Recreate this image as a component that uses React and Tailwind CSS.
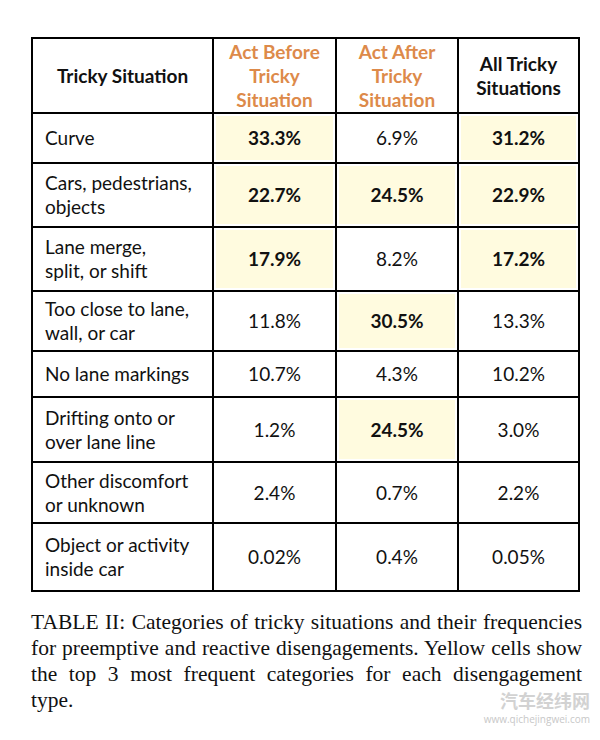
const rows = [
  { label: ['Curve'], h: 'h-[50px]', vals: [['33.3%', true], ['6.9%', false], ['31.2%', true]] },
  { label: ['Cars, pedestrians,', 'objects'], h: 'h-[64px]', vals: [['22.7%', true], ['24.5%', true], ['22.9%', true]] },
  { label: ['Lane merge,', 'split, or shift'], h: 'h-[64px]', vals: [['17.9%', true], ['8.2%', false], ['17.2%', true]] },
  { label: ['Too close to lane,', 'wall, or car'], h: 'h-[60px]', vals: [['11.8%', false], ['30.5%', true], ['13.3%', false]] },
  { label: ['No lane markings'], h: 'h-[46px]', vals: [['10.7%', false], ['4.3%', false], ['10.2%', false]] },
  { label: ['Drifting onto or', 'over lane line'], h: 'h-[65px]', vals: [['1.2%', false], ['24.5%', true], ['3.0%', false]] },
  { label: ['Other discomfort', 'or unknown'], h: 'h-[61px]', vals: [['2.4%', false], ['0.7%', false], ['2.2%', false]] },
  { label: ['Object or activity', 'inside car'], h: 'h-[68px]', vals: [['0.02%', false], ['0.4%', false], ['0.05%', false]] },
]

const caption = [
  'TABLE II: Categories of tricky situations and their frequencies',
  'for preemptive and reactive disengagements. Yellow cells show',
  'the top 3 most frequent categories for each disengagement',
]

function Cell({ value, hi }) {
  return (
    <td
      className={
        'border-2 border-black text-center align-middle ' +
        (hi ? 'bg-[#fffbdf] shadow-[inset_0_0_0_2px_white] font-bold' : '')
      }
    >
      {value}
    </td>
  )
}

export default function App() {
  return (
    <div className="relative w-[600px] h-[740px] bg-white pt-[37px] pl-[31px]">
      <table
        className="border-collapse border-2 border-black text-[19px] leading-[24px] text-[#111]"
        style={{ fontFamily: 'Lato, "Open Sans", sans-serif' }}
      >
        <colgroup>
          <col className="w-[181px]" />
          <col className="w-[123px]" />
          <col className="w-[122px]" />
          <col className="w-[121px]" />
        </colgroup>
        <thead>
          <tr className="h-[75px]">
            <th className="border-2 border-black text-center align-middle font-bold">Tricky Situation</th>
            <th className="border-2 border-black text-center align-middle font-bold text-[#dd8a4a]">
              Act Before
              <br />
              Tricky
              <br />
              Situation
            </th>
            <th className="border-2 border-black text-center align-middle font-bold text-[#dd8a4a]">
              Act After
              <br />
              Tricky
              <br />
              Situation
            </th>
            <th className="border-2 border-black text-center align-middle font-bold">
              All Tricky
              <br />
              Situations
            </th>
          </tr>
        </thead>
        <tbody>
          {rows.map((r, i) => (
            <tr key={i} className={r.h}>
              <td className="border-2 border-black pl-[12px] align-middle">
                {r.label.map((l, j) => (
                  <div key={j}>{l}</div>
                ))}
              </td>
              {r.vals.map(([v, hi], j) => (
                <Cell key={j} value={v} hi={hi} />
              ))}
            </tr>
          ))}
        </tbody>
      </table>

      <div
        className="mt-[17px] w-[551px] text-[21.5px] leading-[26px] text-[#111]"
        style={{ fontFamily: '"Liberation Serif", "Times New Roman", serif' }}
      >
        {caption.map((l, i) => (
          <div key={i} className="text-justify [text-align-last:justify] whitespace-nowrap">
            {l}
          </div>
        ))}
        <div>type.</div>
      </div>

      <div className="absolute right-[10px] top-[688px] flex flex-col items-end">
        <div
          className="text-[18px] font-bold leading-[25px] text-[#d2d2d2]"
          style={{ fontFamily: '"Noto Sans CJK SC", sans-serif' }}
        >
          汽车经纬网
        </div>
        <div className="text-[10px] leading-[12px] text-[#c8c8c8]" style={{ fontFamily: '"Open Sans", sans-serif' }}>
          www.qichejingwei.com
        </div>
      </div>
    </div>
  )
}
